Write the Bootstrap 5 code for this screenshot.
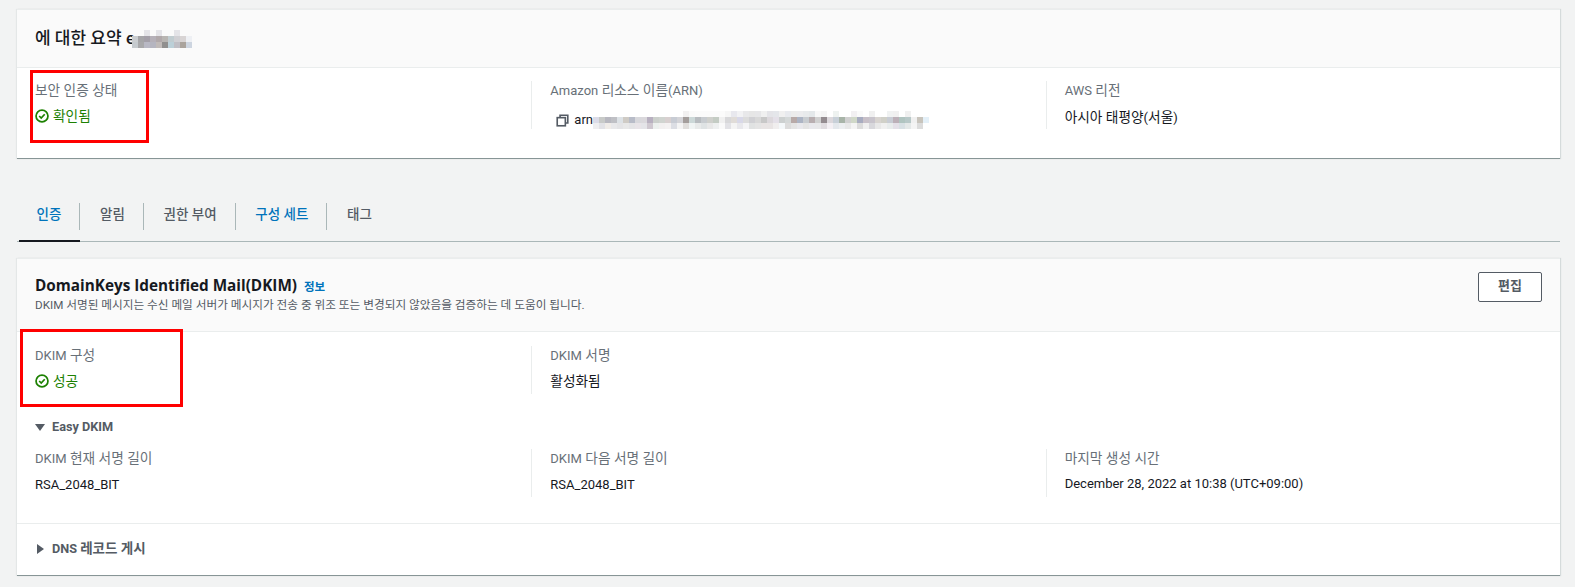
<!DOCTYPE html>
<html lang="ko">
<head>
  <meta charset="UTF-8" />
  <meta name="viewport" content="width=device-width, initial-scale=1.0"/>
  <title>DKIM</title>
  <link href="https://cdn.jsdelivr.net/npm/bootstrap@5.3.2/dist/css/bootstrap.min.css" rel="stylesheet">
  <style>
    body {
      background: #f2f3f3;
      color: #16191f;
      font-family: Roboto, "Noto Sans CJK KR", sans-serif;
      font-size: 13.7px;
      height: 587px;
      overflow: hidden;
      padding: 9px 15px 0 17px;
    }
    .lat { font-size: 13px; }
    .pane {
      background: #fff;
      border-top: 1px solid #eaeded;
      border-bottom: 1px solid #879596;
      box-shadow: -1px 0 1px #e4e7e7, 1px 0 1px #d5dbdb;
      position: relative;
    }
    .pane-head {
      background: #fafafa;
      border-bottom: 1px solid #eaeded;
      padding: 0 18px;
    }
    .head-one { height: 58px; font-size: 17px; font-weight: 500; }
    .head-two { height: 73px; padding-top: 13px; }
    .dkim-title { font-family: "Open Sans", "Noto Sans CJK KR", sans-serif; font-size: 15.3px; font-weight: 700; line-height: 26px; }
    .info-link { color: #0073bb; font-size: 11.5px; font-weight: 600; margin-left: 3px; }
    .dkim-desc { color: #545b64; font-size: 11.67px; line-height: 14px; margin-top: -2px; }
    .edit-btn {
      width: 64px; height: 30px;
      border: 1px solid #545b64; border-radius: 2px; background: #fff;
      color: #545b64; font-size: 13px; font-weight: 700; text-align: center; line-height: 25px;
    }
    .field { padding-left: 18px; min-height: 48px; }
    .field + .field { border-left: 1px solid #eaeded; }
    .field-label { color: #687078; line-height: 18px; margin-bottom: 8px; }
    .field-value { line-height: 18px; }
    .ok-text { color: #1d8102; }
    .arn-row { margin-top: 11px; }
    .copy-icon { margin: 0 5px 0 6px; }
    .tab-bar {
      height: 42px; margin-top: 41px; margin-bottom: 16px;
      border-bottom: 1px solid #aab7b8;
      padding-left: 2px;
    }
    .tab-item {
      height: 42px; margin-bottom: -1px; padding-top: 3px;
      color: #545b64; font-weight: 500; font-size: 13.5px;
      display: flex; align-items: flex-start;
    }
    .tab-item span {
      display: block; height: 27px; line-height: 22px; padding: 0 18px 0 19.7px;
      border-right: 1px solid #aab7b8;
    }
    .tab-item:first-child span { padding-left: 17.5px; }
    .tab-item:last-child span { border-right: 0; }
    .tab-on { border-bottom: 2px solid #16191f; color: #0073bb; }
    .tab-blue { color: #0073bb; }
    .toggle { color: #545b64; font-weight: 700; font-size: 12.7px; line-height: 16px; padding-left: 18px; gap: 7px; }
    .toggle-ko { font-size: 13.5px; }
    .arrow-down { width: 0; height: 0; border-left: 5px solid transparent; border-right: 5px solid transparent; border-top: 7px solid #545b64; }
    .arrow-right { width: 0; height: 0; border-top: 5.5px solid transparent; border-bottom: 5.5px solid transparent; border-left: 7px solid #545b64; margin-left: 2px; margin-right: 1px; }
    .redact { display: block; flex: none; }
    .redact-title { margin-left: -3px; }
    .red-box { position: absolute; border: 3px solid #f00; pointer-events: none; }
    .red-one { left: 13px; top: 60px; width: 119px; height: 73px; }
    .red-two { left: 3px; top: 70px; width: 163px; height: 78px; }
    .pane-rule { border-top: 1px solid #eaeded; }
    .first-row { padding-top: 13px; }
    .dkim-row { padding-top: 14px; }
    .dkim-row .field-label { margin-bottom: 7px; }
    .easy-head { margin-top: 25px; }
    .easy-row { margin-top: 14px; margin-bottom: 26px; }
    .dns-row { padding-top: 16px; }
  </style>
</head>
<body>
  <!-- Summary -->
  <div class="pane" style="height: 150px">
    <div class="pane-head head-one d-flex align-items-center">
      <span>에 대한 요약 e</span>
      <svg class="redact redact-title" data-rows="..e.e..e..|cacdd0,a5a5a8,a39fa8,b5b0b8,b0a8aa,b8b5b2,c0ccd0,d0d0d4,d8d4d4,eef0f4|c5cace,a8a8aa,b8b8c4,b5b5c0,c0bab8,908f8e,bcd0d8,c0bfc5,aaa39c,cdd5e0"></svg>
    </div>
    <div class="row g-0 first-row">
      <div class="col-4 field">
        <div class="field-label">보안 인증 상태</div>
        <div class="field-value ok-text d-flex align-items-center gap-1">
          <svg width="14" height="14" viewBox="0 0 16 16" fill="none" stroke="#1d8102" stroke-width="2"><circle cx="8" cy="8" r="6.8"/><path d="M4.8 8l2.3 2.3 4-4.3"/></svg>
          <span>확인됨</span>
        </div>
      </div>
      <div class="col-4 field">
        <div class="field-label"><span class="lat">Amazon</span> 리소스 이름<span class="lat">(ARN)</span></div>
        <div class="field-value d-flex align-items-center arn-row">
          <svg class="copy-icon" width="13" height="13" viewBox="0 0 16 16" fill="none" stroke="#545b64" stroke-width="2"><path d="M5 4V1.5h9.5V11H12"/><rect x="1.5" y="4.5" width="10" height="10"/></svg>
          <span class="lat">arn</span>
          <svg class="redact" data-rows=",,,,,,,,,,,,,,,f2f1f1,fafafa,fbfbfb,fbfbfb,fbfbfb,fbfbfb,fbfbfb,f6f6f6,e8e8ee,f2f2f4,e8e8ea,e6e6e6,e6e6e8,f0f0f0,e4e4e8,e4e6ea,f0f0f0,e8eaee,ececec,ececee,e8eaec,e4e8ea,f8f8f8,f4f4f4,,eef2f0,,,f2f0f2,fafafa,,f0f0f0,,,f0f2f2,f0f0f0,,f0f0f0,,|dcdce8,c8cac8,b8b8c0,bfc0c5,dde2e6,cfcbc5,b8bcc8,d8d8dc,dad8dc,b8b0c0,ccd0cc,d0d4d0,d8d0d0,c8ccd4,d4d4d8,a49e9c,ccd8d8,b8bcc0,c8ccd0,cfd0cc,c4ccc4,f0f0f0,d8d8da,e0dcd8,d8d8e8,dcdcdc,d0d0d4,d8d8d8,c8c8c8,dcd8dc,e4e0e8,ccd0d0,d4d8d8,b8aaa8,acb4c4,c8ccd0,b8aeb0,d0d0d0,948c90,dcd8dc,c8d0d8,a8b4a8,d0d0d0,d0d8c8,a8acc0,c8c0c8,c8c4cc,d8d4d0,d0d0c8,c8ccd4,bcb0b8,b0c4c0,b8c8c8,f0f0f0,c8c4bc,e4f0f8|eeeef0,e2e2e6,f0ece8,e8e8ea,e4e4e6,e8e8e8,e4e4e6,e8e4e8,e4e4e8,cfc8d0,ecf0ee,f2f0f0,f4f2f2,dcdee4,f4f4f4,e0dedc,f0f4f4,e8eaea,dfe3e4,e8e8e8,eef0f0,fafafa,e2e2e6,f4f4f4,e8e8ec,f4f4f6,e0e2e2,e4e4e4,e8e4e4,e8e4e4,f0eeee,f4f8fa,dcdcdc,e4e4e4,e8e8ec,e4e4e4,e8e8ec,e8e8ea,e0dce0,f4f0f4,e4e8ec,eceef0,e8e8e8,f4f4f4,dcdcdc,f0f0f0,d8d8dc,e8e8e8,f0f0f0,e8ecec,e4e0e8,d8e0e4,e4e8e8,f4f4f4,dcdcdc"></svg>
        </div>
      </div>
      <div class="col-4 field">
        <div class="field-label"><span class="lat">AWS</span> 리전</div>
        <div class="field-value">아시아 태평양<span class="lat">(</span>서울<span class="lat">)</span></div>
      </div>
    </div>
    <div class="red-box red-one"></div>
  </div>

  <!-- Tabs -->
  <div class="tab-bar d-flex">
    <div class="tab-item tab-on"><span>인증</span></div>
    <div class="tab-item"><span>알림</span></div>
    <div class="tab-item"><span>권한 부여</span></div>
    <div class="tab-item tab-blue"><span>구성 세트</span></div>
    <div class="tab-item"><span>태그</span></div>
  </div>

  <!-- DKIM -->
  <div class="pane" style="height: 318px">
    <div class="pane-head head-two d-flex justify-content-between align-items-start">
      <div>
        <div class="dkim-title">DomainKeys Identified Mail(DKIM) <span class="info-link">정보</span></div>
        <div class="dkim-desc">DKIM 서명된 메시지는 수신 메일 서버가 메시지가 전송 중 위조 또는 변경되지 않았음을 검증하는 데 도움이 됩니다.</div>
      </div>
      <div class="edit-btn">편집</div>
    </div>
    <div class="row g-0 dkim-row">
      <div class="col-4 field">
        <div class="field-label"><span class="lat">DKIM</span> 구성</div>
        <div class="field-value ok-text d-flex align-items-center gap-1">
          <svg width="14" height="14" viewBox="0 0 16 16" fill="none" stroke="#1d8102" stroke-width="2"><circle cx="8" cy="8" r="6.8"/><path d="M4.8 8l2.3 2.3 4-4.3"/></svg>
          <span>성공</span>
        </div>
      </div>
      <div class="col-4 field">
        <div class="field-label"><span class="lat">DKIM</span> 서명</div>
        <div class="field-value">활성화됨</div>
      </div>
    </div>
    <div class="toggle d-flex align-items-center easy-head">
      <i class="arrow-down"></i><span>Easy DKIM</span>
    </div>
    <div class="row g-0 easy-row">
      <div class="col-4 field">
        <div class="field-label"><span class="lat">DKIM</span> 현재 서명 길이</div>
        <div class="field-value lat">RSA_2048_BIT</div>
      </div>
      <div class="col-4 field">
        <div class="field-label"><span class="lat">DKIM</span> 다음 서명 길이</div>
        <div class="field-value lat">RSA_2048_BIT</div>
      </div>
      <div class="col-4 field">
        <div class="field-label">마지막 생성 시간</div>
        <div class="field-value lat">December 28, 2022 at 10:38 (UTC+09:00)</div>
      </div>
    </div>
    <div class="pane-rule toggle d-flex align-items-center dns-row">
      <i class="arrow-right"></i><span>DNS <span class="toggle-ko">레코드 게시</span></span>
    </div>
    <div class="red-box red-two"></div>
  </div>

  <script src="https://cdn.jsdelivr.net/npm/bootstrap@5.3.2/dist/js/bootstrap.bundle.min.js"></script>
  <script>
    // blurred-out text: 6px mosaic blocks, rows split by | and colours by comma
    document.querySelectorAll('.redact').forEach(svg => {
      const rows = svg.dataset.rows.split('|').map(r => r.includes(',') ? r.split(',') : [...r].map(c => c === 'e' ? 'e4e4e8' : ''));
      const cols = Math.max(...rows.map(r => r.length));
      svg.setAttribute('width', cols * 6);
      svg.setAttribute('height', rows.length * 6);
      svg.setAttribute('shape-rendering', 'crispEdges');
      let out = '';
      rows.forEach((row, y) => row.forEach((c, x) => {
        if (c) out += `<rect x="${x * 6}" y="${y * 6}" width="6" height="6" fill="#${c}"/>`;
      }));
      svg.innerHTML = out;
    });
  </script>
</body>
</html>
